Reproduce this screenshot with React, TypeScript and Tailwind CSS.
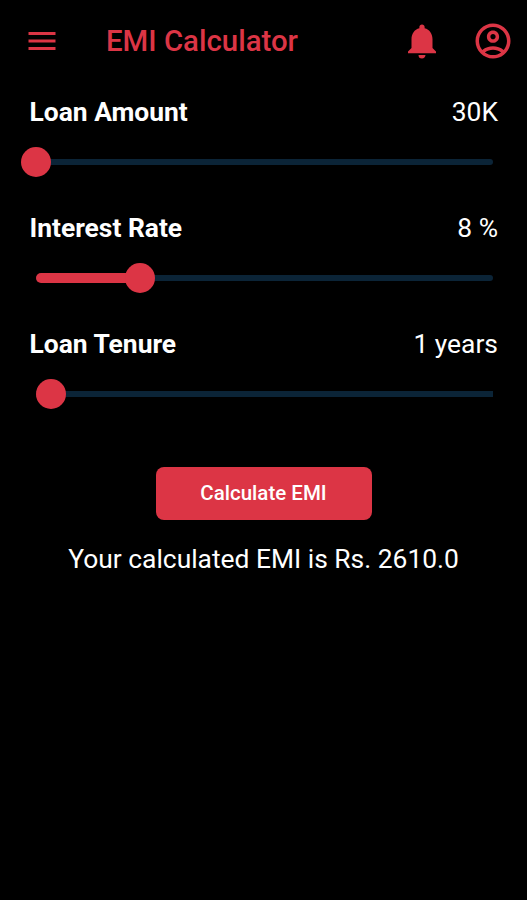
import { useState } from "react";
import clsx from "clsx";
import { MdMenu, MdNotifications, MdOutlineAccountCircle } from "react-icons/md";

interface SliderRowProps {
  label: string;
  display: string;
  value: number;
  min: number;
  max: number;
  step?: number;
  discrete?: boolean;
  onChange: (value: number) => void;
}

function SliderRow({ label, display, value, min, max, step = 1, discrete, onChange }: SliderRowProps) {
  const percent = ((value - min) / (max - min)) * 100;

  return (
    <section className="h-[116px]">
      <div className="flex items-center justify-between pl-[29.5px] pr-[29px] h-[30px] leading-[30px] text-white">
        <h2 className="text-[26.4px] font-bold">{label}</h2>
        <span className="text-[26.4px]">{display}</span>
      </div>
      <div className="relative mt-5 ml-[35.5px] mr-[34.5px] h-[30px] flex items-center">
        <div className={clsx("h-1.5 w-full bg-[#0b2437]", !discrete && "rounded-full")} />
        {/* the discrete slider has no thick active part */}
        {percent > 0 && !discrete && (
          <div
            className="absolute left-0 h-2.5 rounded-l-full bg-[#dc3545]"
            style={{ width: `${percent}%` }}
          />
        )}
        <div
          className="absolute size-[30px] -translate-x-1/2 rounded-full bg-[#dc3545]"
          style={{ left: `${percent}%` }}
        />
        <input
          type="range"
          aria-label={label}
          min={min}
          max={max}
          step={step}
          value={value}
          onChange={(e) => onChange(Number(e.target.value))}
          className="absolute inset-0 w-full opacity-0 cursor-pointer"
        />
      </div>
    </section>
  );
}

function calculateEmi(amount: number, rate: number, years: number) {
  const months = years * 12;
  if (months === 0) return 0;
  const r = rate / 12 / 100;
  if (r === 0) return Math.round(amount / months);
  const growth = Math.pow(1 + r, months);
  return Math.round((amount * r * growth) / (growth - 1));
}

export default function App() {
  const [amount, setAmount] = useState(30);
  const [rate, setRate] = useState(8);
  const [years, setYears] = useState(1);
  const [emi, setEmi] = useState(() => calculateEmi(30000, 8, 1));

  return (
    <div className="min-h-screen w-full bg-black font-['Roboto',sans-serif]">
      <header className="flex items-center h-[82px] pl-[23.5px] pr-[13.5px] text-[#dc3545]">
        <button aria-label="Menu">
          <MdMenu size={36} />
        </button>
        <h1 className="ml-[46.5px] text-[29.4px] font-medium leading-[32px] whitespace-nowrap">EMI Calculator</h1>
        <button aria-label="Notifications" className="ml-auto">
          <MdNotifications size={42} />
        </button>
        <button aria-label="Account" className="ml-[28.5px]">
          <MdOutlineAccountCircle size={42} />
        </button>
      </header>

      <main className="pt-[15px]">
        <SliderRow label="Loan Amount" display={`${amount}K`} value={amount} min={30} max={1000} onChange={setAmount} />
        <SliderRow label="Interest Rate" display={`${rate} %`} value={rate} min={0} max={35} onChange={setRate} />
        <SliderRow label="Loan Tenure" display={`${years} years`} value={years} min={0} max={30} discrete onChange={setYears} />

        <div className="flex flex-col items-center mt-[22px]">
          <button
            onClick={() => setEmi(calculateEmi(amount * 1000, rate, years))}
            className="w-[216px] h-[53px] rounded-lg bg-[#dc3545] text-white text-[20.5px] font-medium"
          >
            Calculate EMI
          </button>
          <p className="mt-6 text-[26.4px] leading-[30px] text-white">Your calculated EMI is Rs. {emi.toFixed(1)}</p>
        </div>
      </main>
    </div>
  );
}
